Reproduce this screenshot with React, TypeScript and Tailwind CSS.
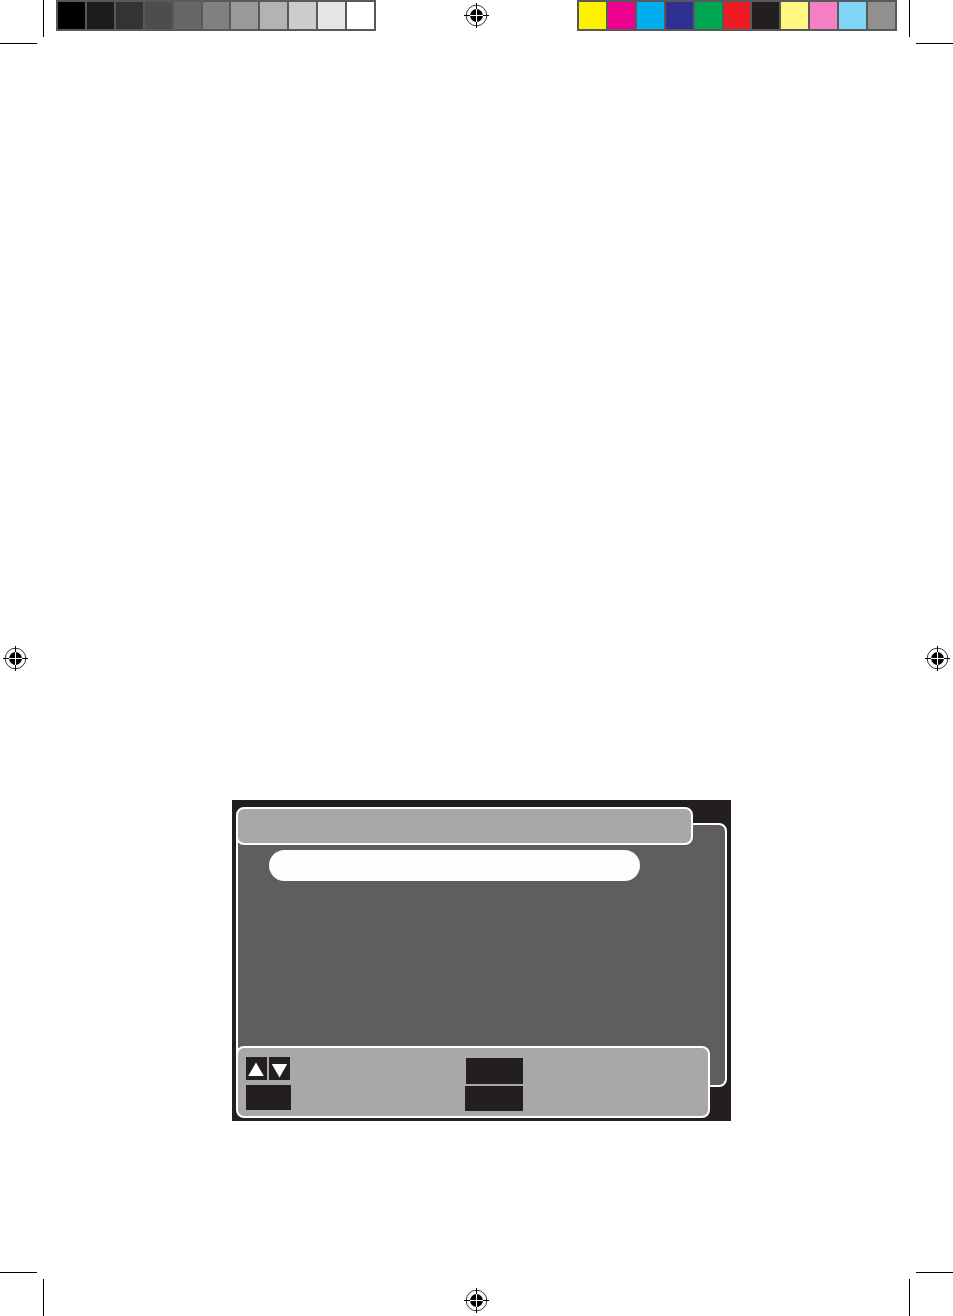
const GRAYS = [
  'bg-black',
  'bg-[#1c1c1c]',
  'bg-[#333333]',
  'bg-[#4d4d4d]',
  'bg-[#666666]',
  'bg-[#808080]',
  'bg-[#999999]',
  'bg-[#b3b3b3]',
  'bg-[#cccccc]',
  'bg-[#e6e6e6]',
  'bg-white',
];

const INKS = [
  'bg-[#fff200]',
  'bg-[#ec008c]',
  'bg-[#00aeef]',
  'bg-[#2e3192]',
  'bg-[#00a651]',
  'bg-[#ed1c24]',
  'bg-[#231f20]',
  'bg-[#fff780]',
  'bg-[#f680c4]',
  'bg-[#80d6f7]',
  'bg-[#918f90]',
];

function Swatches({ colors }: { colors: string[] }) {
  return (
    <div className="flex h-[31px] w-80 gap-0.5 bg-[#58595b] p-0.5">
      {colors.map((color) => (
        <span key={color} className={`flex-1 ${color}`} />
      ))}
    </div>
  );
}

function CropMark({ className }: { className?: string }) {
  return (
    <svg
      className={`size-11 shrink-0 ${className ?? ''}`}
      viewBox="0 0 44 44"
      shapeRendering="crispEdges"
      aria-hidden="true"
    >
      <rect x="0" y="43" width="37" height="1" />
      <rect x="43" y="0" width="1" height="37" />
    </svg>
  );
}

function RegistrationMark() {
  return (
    <svg className="size-[25px] shrink-0" viewBox="0 0 25 25" fill="none" aria-hidden="true">
      <circle cx="12.5" cy="12.5" r="10.3" stroke="#000" strokeWidth="0.8" />
      <path d="M12.5 0V25M0 12.5H25" stroke="#000" strokeWidth="1" />
      <circle cx="12.5" cy="12.5" r="6.4" fill="#000" />
      <path d="M12.5 6V19M6 12.5H19" stroke="#fff" strokeWidth="1" />
    </svg>
  );
}

function ArrowKey({ direction }: { direction: 'up' | 'down' }) {
  return (
    <button
      type="button"
      aria-label={direction === 'up' ? 'Up' : 'Down'}
      className="flex h-[23px] w-[21px] items-center justify-center bg-[#231f20]"
    >
      <svg className="h-[23px] w-[21px]" viewBox="0 0 21 23" fill="#fff" aria-hidden="true">
        {direction === 'up' ? <path d="M10 5.5L17.8 19H2.2Z" /> : <path d="M10.5 20.5L2.8 7H18.2Z" />}
      </svg>
    </button>
  );
}

function MenuScreen() {
  return (
    <section className="flex w-full max-w-[499px] flex-col bg-[#231f20] pt-[7px] pr-1 pb-[3px] pl-1">
      <header className="relative z-10 mr-[34px] h-[38px] rounded-lg border-2 border-white bg-[#a8a8a8]" />
      <div className="-mt-[22px] h-[264px] rounded-tr-lg rounded-br-lg border-2 border-white bg-[#5f5d5e] pt-[25px] pr-[85px] pl-[31px]">
        <div className="h-[31px] rounded-full bg-[#fdfdfd]" />
      </div>
      <footer className="relative z-10 -mt-[41px] mr-[17px] flex h-[72px] rounded-lg border-2 border-white bg-[#a8a8a8] pt-[9px] pl-2">
        <div className="flex flex-1 flex-col gap-[5px]">
          <div className="flex gap-0.5">
            <ArrowKey direction="up" />
            <ArrowKey direction="down" />
          </div>
          <span className="h-[25px] w-[45px] bg-[#231f20]" />
        </div>
        <div className="mr-[185px] flex flex-col items-end gap-0.5 pt-px">
          <span className="h-[26px] w-[57px] bg-[#231f20]" />
          <span className="h-[25px] w-[58px] bg-[#231f20]" />
        </div>
      </footer>
    </section>
  );
}

export default function App() {
  return (
    <div className="flex min-h-screen flex-col bg-white">
      <div className="flex h-11 items-start justify-between">
        <div className="flex gap-3">
          <CropMark />
          <Swatches colors={GRAYS} />
        </div>
        <div className="pt-[3px]">
          <RegistrationMark />
        </div>
        <div className="flex gap-3">
          <Swatches colors={INKS} />
          <CropMark className="-scale-x-100" />
        </div>
      </div>

      <main className="flex flex-1 items-center px-[3px]">
        <RegistrationMark />
        <div className="flex flex-1 justify-center self-stretch pb-[151px] pl-[10px]">
          <div className="flex w-full items-end justify-center">
            <MenuScreen />
          </div>
        </div>
        <RegistrationMark />
      </main>

      <div className="flex h-11 items-end justify-between">
        <CropMark className="-scale-y-100" />
        <div className="pb-[3px]">
          <RegistrationMark />
        </div>
        <CropMark className="-scale-100" />
      </div>
    </div>
  );
}
